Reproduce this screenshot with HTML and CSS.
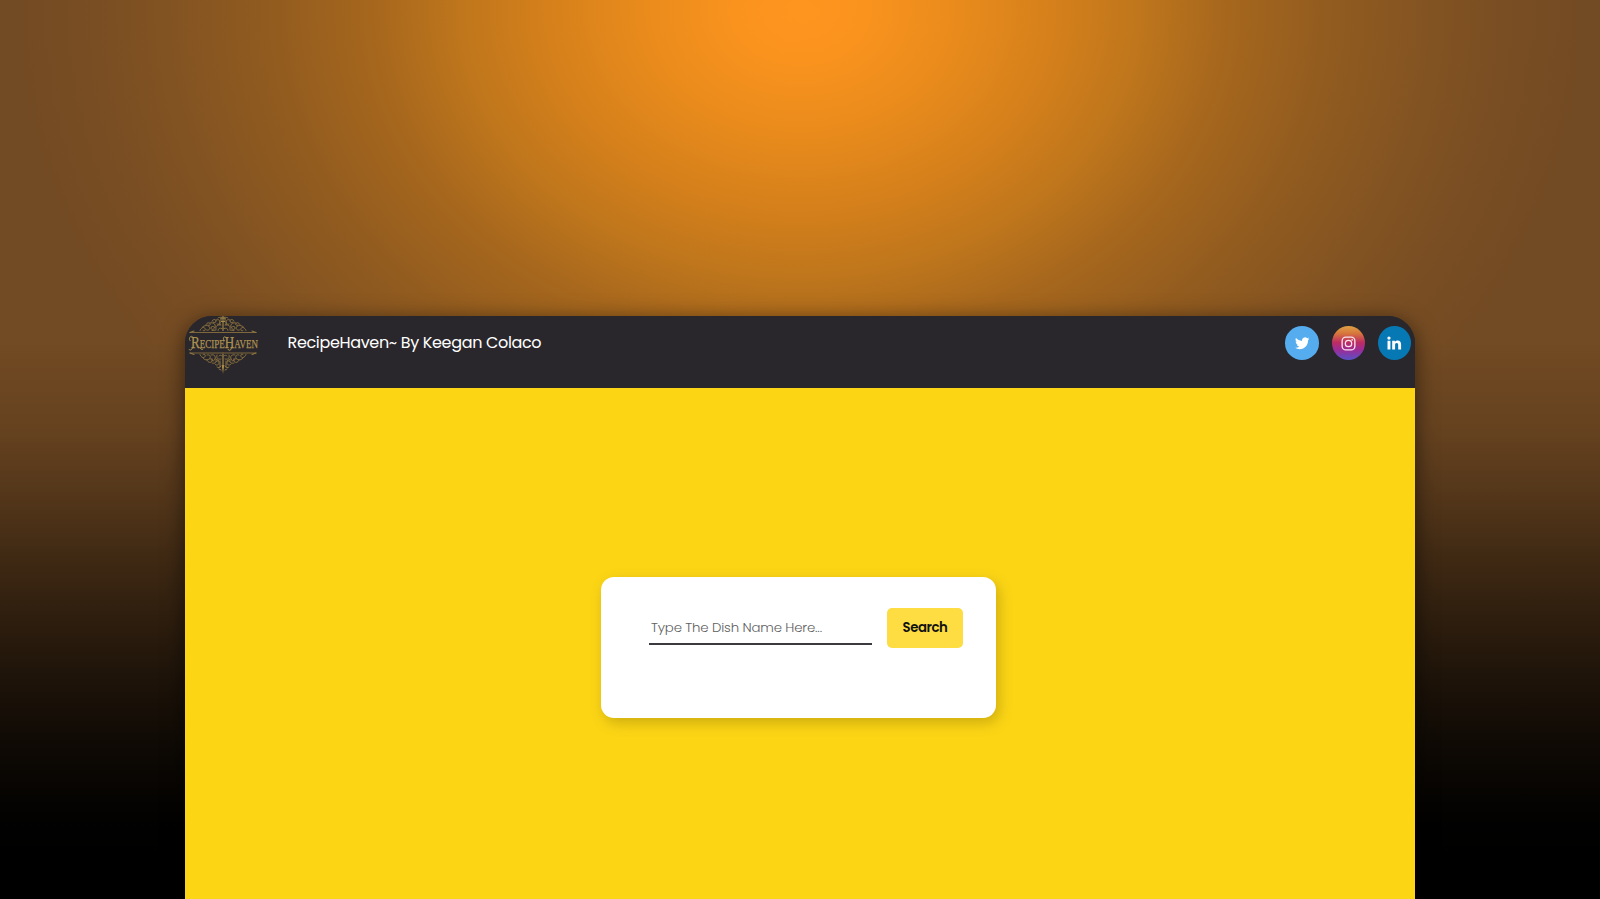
FILE: index.html
```html
<!DOCTYPE html>
<html lang="en">
<head>
<meta charset="utf-8">
<title>RecipeHaven</title>
<link rel="stylesheet" href="styles.css">
</head>
<body>
<main class="window">
  <header class="topbar">
    <svg class="logo" viewBox="0 0 76 62" role="img" aria-label="RecipeHaven">
      <defs>
        <g id="flourish" fill="none" stroke="#95793f" stroke-width=".9" stroke-linecap="round">
          <path d="M5 16.500H38" stroke-width=".8"/>
          <path d="M5 16.500l4-1.500" stroke-width="1.100"/>
          <path d="M15 14.500c1-3 4-4 5-2s-1 3-2 2M17.500 11c2-2 6-2 7 0s-1 4-3 3M21 9c0-2 3-3 4-1.500s-1 2.500-2 1.500M25 7c3-1 6 1 5 4s-4 3-4 1 2-2 3-1M27 5c1-2 4-2 4 0s-2 2-3 1M31 4c2-1 4 0 4 2s-2 3-3 2M33 2c1-1 3-1 3 1M31 13c-1-3 2-5 5-4M33 14.500c0-2 2-3 4-2M27 14.500l4-.5M35 6v3M36 1v4"/>
        </g>
        <g id="pendant" fill="none" stroke="#95793f" stroke-width=".9" stroke-linecap="round">
          <path d="M5 37H38" stroke-width=".8"/>
          <path d="M5 37l4 1.500" stroke-width="1.100"/>
          <path d="M15 38.500c1 3 4 4 5 2s-1-3-2-2M18 42c2 3 6 2 7 0s-1-4-3-3M22 44c1 3 4 3 5 1s-1-3-2-2M26 39c3-1 5 1 4 4s-4 2-3 0M27 47c2 1 5-.5 4-3M30 48c1 2 4 1 4-1s-2-3-3-1M32 51c1 1 3 1 4-1M32 39c-1 3 1 5 4 4M34 40c1-1 2-1 3 0M34 53l2 1M35 45v6M31 43l3 2"/>
        </g>
      </defs>
      <use href="#flourish"/>
      <use href="#flourish" transform="matrix(-1 0 0 1 76 0)"/>
      <use href="#pendant"/>
      <use href="#pendant" transform="matrix(-1 0 0 1 76 0)"/>
      <path d="M38 0v15M36 2h4M36 5.500h4M38 38v14" stroke="#a98c4b" stroke-width="1.100"/>
      <path d="M36.800 49h2.400L38 58z" fill="#a98c4b"/>
      <text class="logo-text" x="6" y="31.500" textLength="67" lengthAdjust="spacingAndGlyphs">RecipeHaven</text>
      <path d="M7.500 20.500c-3-1-4 3-2 4.500M7.500 31c0 3-3 4-3.500 2M15 31.500c1 2 2 2.500 3 1.500M40.500 21c-2-1-3 2-1 4M46.500 31c0 4-3 4-3.500 2" fill="none" stroke="#b09352" stroke-width="1"/>
    </svg>
    <h1 class="title">RecipeHaven~ By Keegan Colaco</h1>
    <nav class="social">
      <a class="badge twitter" aria-label="Twitter">
        <svg viewBox="0 0 24 24" width="14.500" height="14.500"><path fill="#fff" d="M23.950 4.570a10 10 0 0 1-2.820.770 4.960 4.960 0 0 0 2.160-2.720c-.950.550-2 .950-3.130 1.180a4.920 4.920 0 0 0-8.380 4.480A13.930 13.930 0 0 1 1.640 3.160a4.920 4.920 0 0 0 1.520 6.570 4.900 4.900 0 0 1-2.230-.610v.060a4.920 4.920 0 0 0 3.950 4.830 5 5 0 0 1-2.210.080 4.940 4.940 0 0 0 4.600 3.420A9.870 9.870 0 0 1 0 19.540a13.940 13.940 0 0 0 7.550 2.210c9.050 0 14-7.500 14-13.980 0-.210 0-.420-.020-.630a9.940 9.940 0 0 0 2.460-2.550z"/></svg>
      </a>
      <a class="badge instagram" aria-label="Instagram">
        <svg viewBox="0 0 16 16" width="15" height="15" fill="none" stroke="#fbe4ee" stroke-width="1.400"><rect x="1.200" y="1.200" width="13.600" height="13.600" rx="4"/><circle cx="8" cy="8" r="3.400"/><circle cx="11.900" cy="4.100" r=".9" fill="#fbe4ee" stroke="none"/></svg>
      </a>
      <a class="badge linkedin" aria-label="LinkedIn">
        <svg viewBox="0 0 14 14" width="14.500" height="14.500" fill="#fff"><circle cx="1.900" cy="2" r="1.600"/><path d="M.5 4.700h2.800V13H.5zM5 4.700h2.600v1.100c.5-.8 1.400-1.350 2.600-1.350 2.600 0 3.400 1.600 3.400 4V13h-2.800V9c0-1.200-.2-2.150-1.400-2.150-1.250 0-1.600.9-1.600 2.100V13H5z"/></svg>
      </a>
    </nav>
  </header>
  <section class="content">
    <form class="card">
      <input class="dish" type="text" placeholder="Type The Dish Name Here...">
      <button class="search" type="button">Search</button>
    </form>
  </section>
</main>
</body>
</html>
```
FILE: styles.css
```css
* { box-sizing: border-box; }

body {
  margin: 0;
  height: 899px;
  overflow: hidden;
  padding: 316px 185px 0;
  font-family: Poppins, Inter, "Open Sans", sans-serif;
  background:
    linear-gradient(to bottom, transparent 0, transparent 340px, rgba(0,0,0,.1) 425px, rgba(0,0,0,.28) 500px, rgba(0,0,0,.45) 560px, rgba(0,0,0,.6) 620px, rgba(0,0,0,.74) 680px, rgba(0,0,0,.88) 750px, rgba(0,0,0,.98) 820px, #000 860px),
    radial-gradient(ellipse 790px 620px at 50% 10px, #fe951f 0, #fa931e 8%, #e98b1c 20%, #d37f1b 33%, #bf761c 43%, #a8681d 53%, #935c1f 66%, #825322 80%, #784d23 91%, #724a23 100%);
}

.window {
  height: 583px;
  display: flex;
  flex-direction: column;
  border-radius: 27px 27px 0 0;
  box-shadow: 0 4px 22px rgba(0,0,0,.55);
  background: linear-gradient(#29272c 60px, #fcd615 60px);
}

.topbar {
  flex: none;
  height: 72px;
  display: flex;
  align-items: flex-start;
  background: #29272c;
  border-radius: 27px 27px 0 0;
}

.logo { width: 76px; height: 62px; flex: none; overflow: visible; }

.logo-text {
  font: 17.5px "Liberation Serif", serif;
  font-variant: small-caps;
  fill: #b09352;
  stroke: #b09352;
  stroke-width: .25px;
}

.title {
  margin: 14px 0 0 26.5px;
  font-size: 16px;
  line-height: 25px;
  font-weight: 400;
  color: #fff;
  letter-spacing: -.34px;
  white-space: nowrap;
}

.social {
  display: flex;
  margin: 10px 4px 0 auto;
  gap: 13px;
}

.badge {
  width: 33px;
  height: 34px;
  border-radius: 50%;
  display: grid;
  place-items: center;
}

.twitter { width: 34.5px; background: #55acee; }
.instagram { background: linear-gradient(#dda044 0, #d7763c 22%, #bd2c62 48%, #9c2c97 70%, #5851c4 100%); }
.linkedin { background: #0679b5; }

.content {
  flex: 1;
  padding: 189px 0 0 416px;
}

.card {
  width: 395px;
  height: 141px;
  display: flex;
  align-items: flex-start;
  gap: 15px;
  padding: 30.5px 33px 0 48px;
  background: #fff;
  border-radius: 13px;
  box-shadow: 3px 5px 14px rgba(100,75,0,.3);
}

.dish {
  width: 223px;
  height: 37px;
  padding: 5px 2px 0;
  border: 0;
  border-bottom: 2px solid #3c393f;
  background: none;
  font: 300 13.3px Poppins, Inter, sans-serif;
  letter-spacing: -.15px;
  outline: 0;
}

.dish::placeholder { color: #606060; opacity: 1; }

.search {
  width: 76.5px;
  height: 40.5px;
  padding: 0;
  border: 0;
  border-radius: 5px;
  background: #fddd42;
  color: #111;
  font: 600 13.3px Poppins, Inter, sans-serif;
  letter-spacing: -.45px;
}
```
